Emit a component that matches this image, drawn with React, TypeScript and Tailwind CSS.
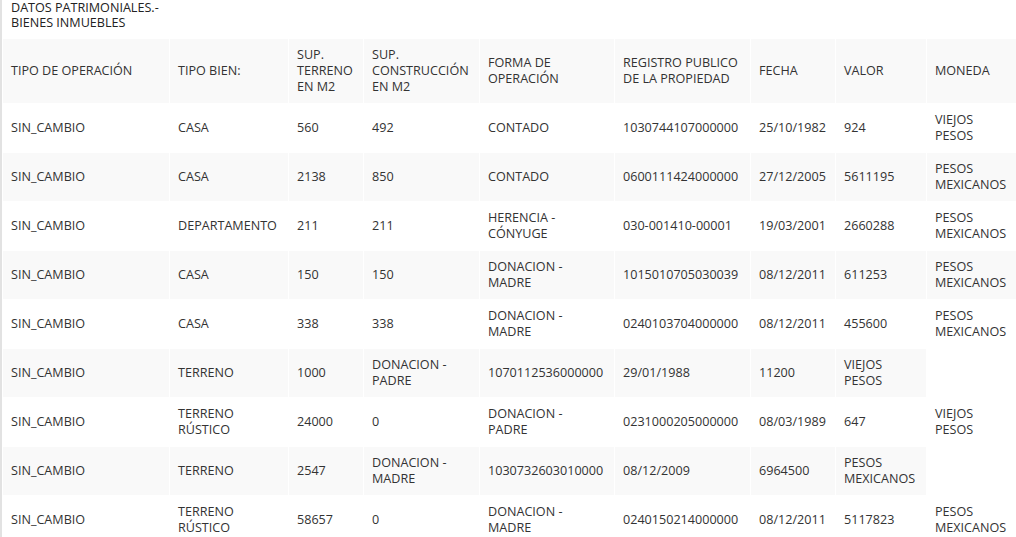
const headers = [
  "TIPO DE OPERACIÓN",
  "TIPO BIEN:",
  "SUP.\nTERRENO\nEN M2",
  "SUP.\nCONSTRUCCIÓN\nEN M2",
  "FORMA DE\nOPERACIÓN",
  "REGISTRO PUBLICO\nDE LA PROPIEDAD",
  "FECHA",
  "VALOR",
  "MONEDA",
];

const widths = ["w-[167px]", "w-[119px]", "w-[75px]", "w-[116px]", "w-[135px]", "w-[136px]", "w-[85px]", "w-[91px]", "w-[90px]"];

// some rows come without the construction value, so the cells slide left
const rows: string[][] = [
  ["SIN_CAMBIO", "CASA", "560", "492", "CONTADO", "1030744107000000", "25/10/1982", "924", "VIEJOS\nPESOS"],
  ["SIN_CAMBIO", "CASA", "2138", "850", "CONTADO", "0600111424000000", "27/12/2005", "5611195", "PESOS\nMEXICANOS"],
  ["SIN_CAMBIO", "DEPARTAMENTO", "211", "211", "HERENCIA -\nCÓNYUGE", "030-001410-00001", "19/03/2001", "2660288", "PESOS\nMEXICANOS"],
  ["SIN_CAMBIO", "CASA", "150", "150", "DONACION -\nMADRE", "1015010705030039", "08/12/2011", "611253", "PESOS\nMEXICANOS"],
  ["SIN_CAMBIO", "CASA", "338", "338", "DONACION -\nMADRE", "0240103704000000", "08/12/2011", "455600", "PESOS\nMEXICANOS"],
  ["SIN_CAMBIO", "TERRENO", "1000", "DONACION -\nPADRE", "1070112536000000", "29/01/1988", "11200", "VIEJOS\nPESOS"],
  ["SIN_CAMBIO", "TERRENO\nRÚSTICO", "24000", "0", "DONACION -\nPADRE", "0231000205000000", "08/03/1989", "647", "VIEJOS\nPESOS"],
  ["SIN_CAMBIO", "TERRENO", "2547", "DONACION -\nMADRE", "1030732603010000", "08/12/2009", "6964500", "PESOS\nMEXICANOS"],
  ["SIN_CAMBIO", "TERRENO\nRÚSTICO", "58657", "0", "DONACION -\nMADRE", "0240150214000000", "08/12/2011", "5117823", "PESOS\nMEXICANOS"],
];

const App = () => {
  return (
    <div className="min-h-screen bg-white font-['Open_Sans',sans-serif] text-[12.6px] leading-[16px] text-[#333]">
      <div className="border-l-2 border-[#e2e2e2] min-h-screen">
        <div className="px-[9px] leading-[15px] text-[#222]">
          DATOS PATRIMONIALES.-
          <br />
          BIENES INMUEBLES
        </div>
        <table className="mt-[8px] w-[1014px] table-fixed border-separate border-spacing-0">
          <colgroup>
            {widths.map((w, i) => (
              <col key={i} className={w} />
            ))}
          </colgroup>
          <thead>
            <tr>
              {headers.map((h) => (
                <th
                  key={h}
                  className="whitespace-pre-line border-l border-t border-white bg-[#f9f9f9] px-2 py-2 text-left align-middle font-normal"
                >
                  {h}
                </th>
              ))}
            </tr>
          </thead>
          <tbody>
            {rows.map((row, r) => (
              <tr key={r}>
                {row.map((cell, c) => (
                  <td
                    key={c}
                    className={`whitespace-pre-line border-l border-t border-white px-2 py-2 align-middle ${
                      r % 2 === 1 ? "bg-[#f9f9f9]" : "bg-white"
                    }`}
                  >
                    {cell}
                  </td>
                ))}
              </tr>
            ))}
          </tbody>
        </table>
      </div>
    </div>
  );
};

export default App;
